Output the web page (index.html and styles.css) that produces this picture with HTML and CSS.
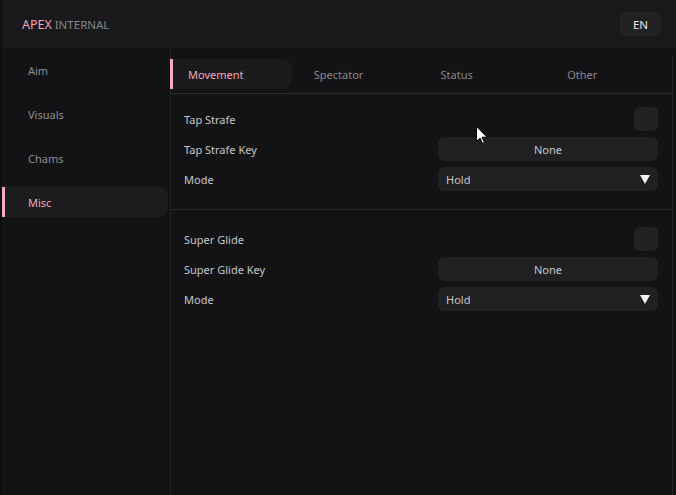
FILE: index.html
```html
<!DOCTYPE html>
<html lang="en">
<head>
    <meta charset="UTF-8">
    <meta name="viewport" content="width=device-width, initial-scale=1.0">
    <title>Apex Internal</title>
    <link rel="stylesheet" href="styles.css">
</head>
<body>
    <div class="app">
        <header class="topbar">
            <div class="logo"><span class="logo-main">APEX</span> <span class="logo-sub">INTERNAL</span></div>
            <button class="lang">EN</button>
        </header>

        <div class="main">
            <nav class="sidebar">
                <a class="nav-item">Aim</a>
                <a class="nav-item">Visuals</a>
                <a class="nav-item">Chams</a>
                <a class="nav-item active">Misc</a>
            </nav>

            <section class="panel">
                <div class="tabs">
                    <div class="tab active">Movement</div>
                    <div class="tab">Spectator</div>
                    <div class="tab">Status</div>
                    <div class="tab">Other</div>
                </div>

                <div class="group first">
                    <div class="row">
                        <span class="label">Tap Strafe</span>
                        <span class="check"></span>
                    </div>
                    <div class="row">
                        <span class="label">Tap Strafe Key</span>
                        <button class="keybind">None</button>
                    </div>
                    <div class="row">
                        <span class="label">Mode</span>
                        <div class="select">Hold <span class="arrow"></span></div>
                    </div>
                </div>

                <div class="group">
                    <div class="row">
                        <span class="label">Super Glide</span>
                        <span class="check"></span>
                    </div>
                    <div class="row">
                        <span class="label">Super Glide Key</span>
                        <button class="keybind">None</button>
                    </div>
                    <div class="row">
                        <span class="label">Mode</span>
                        <div class="select">Hold <span class="arrow"></span></div>
                    </div>
                </div>
            </section>
        </div>

        <!-- mouse pointer visible in the capture -->
        <svg class="cursor" width="12" height="19" viewBox="0 0 12 19">
            <path d="M0.5 0.5 L0.5 15.5 L4 12 L6.5 17.5 L8.5 16.5 L6 11.2 L11 11.2 Z" fill="#fff" stroke="#000" stroke-width="1"/>
        </svg>
    </div>
</body>
</html>
```

FILE: styles.css
```css
* {
    box-sizing: border-box;
}

html, body {
    margin: 0;
    height: 100%;
}

body {
    font-family: "Noto Sans", "Open Sans", sans-serif;
    font-size: 11px;
    background: #131315;
    color: #c6c6ca;
}

.app {
    position: relative;
    height: 100%;
    display: flex;
    flex-direction: column;
    border-left: 2px solid #0f0f11;
}

.topbar {
    height: 48px;
    flex-shrink: 0;
    display: flex;
    align-items: center;
    justify-content: space-between;
    padding: 0 15px 0 20px;
    background: #19191b;
}

.logo-main {
    color: #f2a4b6;
    font-size: 12.5px;
}

.logo-sub {
    color: #85858a;
    font-size: 11.5px;
}

.lang {
    width: 41px;
    height: 24px;
    border: none;
    border-radius: 6px;
    background: #222225;
    color: #e6e6e8;
    font-family: inherit;
    font-size: 11.5px;
    padding: 0;
}

.main {
    flex: 1;
    display: flex;
}

.sidebar {
    width: 169px;
    flex-shrink: 0;
    border-right: 1px solid #27272a;
    display: flex;
    flex-direction: column;
    gap: 14px;
    padding-top: 7px;
}

.nav-item {
    height: 30px;
    display: flex;
    align-items: center;
    padding-left: 23px;
    color: #8d8d92;
    border-left: 3px solid transparent;
    border-radius: 0 9px 9px 0;
    margin-right: 2px;
}

.nav-item.active {
    color: #f2a4b6;
    background: #1c1c1f;
    border-left-color: #f5aabb;
}

.panel {
    width: 502px;
    margin-top: 9px;
    border-right: 1px solid #29292c;
    display: flex;
    flex-direction: column;
}

.tabs {
    display: grid;
    grid-template-columns: repeat(4, 1fr);
    gap: 6px;
    padding: 2px 0 4px;
    border-bottom: 1px solid #2a2a2d;
}

.tab {
    height: 30px;
    display: flex;
    align-items: center;
    padding-left: 16px;
    color: #88888d;
    border-radius: 0 9px 9px 0;
}

.tab.active {
    color: #f2a4b6;
    background: #1a1a1d;
    border-left: 3px solid #f5aabb;
    margin-left: -1px;
    padding-left: 15px;
}

.group {
    padding: 14px 14px 14px 13px;
    border-bottom: 1px solid #29292c;
}

.group.first {
    padding-top: 10px;
    padding-bottom: 15px;
}

.row {
    height: 30px;
    display: flex;
    align-items: center;
    justify-content: space-between;
}

.check {
    width: 24px;
    height: 24px;
    border-radius: 6px;
    background: #222225;
}

.keybind {
    width: 220px;
    height: 24px;
    border: none;
    border-radius: 6px;
    background: #202023;
    color: #c6c6ca;
    font-family: inherit;
    font-size: 11px;
    padding: 0;
}

.select {
    width: 220px;
    height: 24px;
    border-radius: 6px;
    background: #202023;
    display: flex;
    align-items: center;
    justify-content: space-between;
    padding: 0 8px 0 8px;
}

.arrow {
    width: 0;
    height: 0;
    border-left: 5px solid transparent;
    border-right: 5px solid transparent;
    border-top: 9px solid #f2f2f4;
}

.group:last-child {
    border-bottom: none;
}

.cursor {
    position: absolute;
    left: 474px;
    top: 126px;
}
```
